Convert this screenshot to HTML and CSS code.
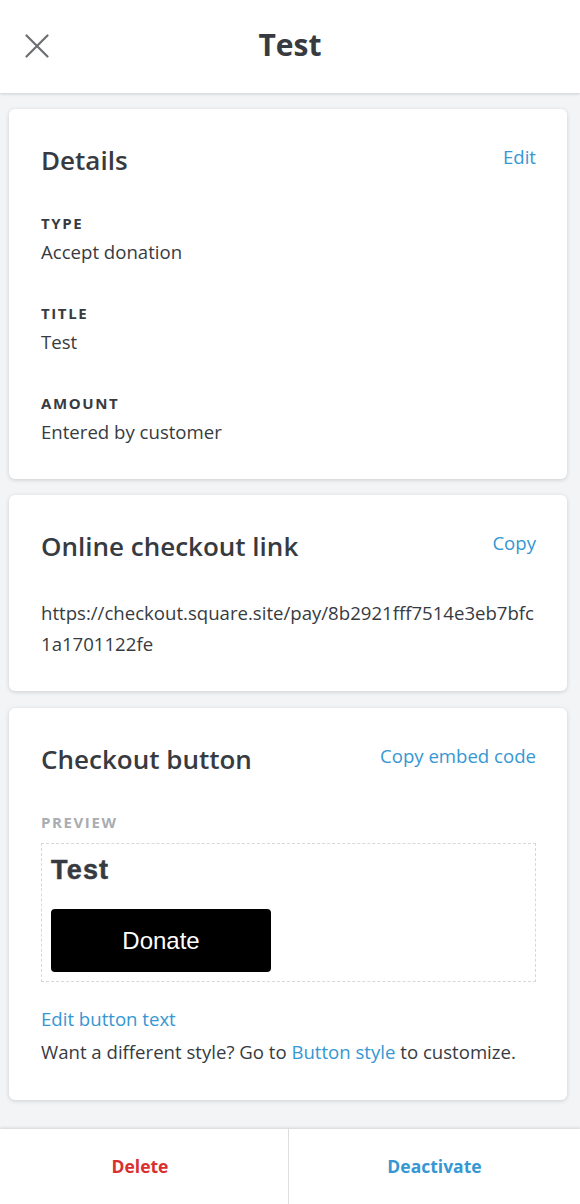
FILE: index.html
```html
<!DOCTYPE html>
<html>
<head>
<meta charset="utf-8">
<link rel="stylesheet" href="styles.css">
</head>
<body>
<header class="topbar">
  <button class="close" aria-label="Close">
    <svg width="24" height="24" viewBox="0 0 24 24"><path d="M1.5 1.5 L22.5 22.5 M22.5 1.5 L1.5 22.5" stroke="#6b6e72" stroke-width="2.2" stroke-linecap="round" fill="none"/></svg>
  </button>
  <h1 class="title">Test</h1>
</header>
<main class="content">
  <section class="card card-details">
    <div class="card-head">
      <h2>Details</h2>
      <a class="link">Edit</a>
    </div>
    <div class="field">
      <div class="label">TYPE</div>
      <div class="value">Accept donation</div>
    </div>
    <div class="field">
      <div class="label">TITLE</div>
      <div class="value">Test</div>
    </div>
    <div class="field">
      <div class="label">AMOUNT</div>
      <div class="value">Entered by customer</div>
    </div>
  </section>
  <section class="card card-link">
    <div class="card-head">
      <h2>Online checkout link</h2>
      <a class="link">Copy</a>
    </div>
    <p class="url">https://checkout.square.site/pay/8b2921fff7514e3eb7bfc<br>1a1701122fe</p>
  </section>
  <section class="card card-button">
    <div class="card-head">
      <h2>Checkout button</h2>
      <a class="link">Copy embed code</a>
    </div>
    <div class="preview-label">PREVIEW</div>
    <div class="preview">
      <div class="preview-title">Test</div>
      <div class="donate">Donate</div>
    </div>
    <a class="link edit-text">Edit button text</a>
    <p class="hint">Want a different style? Go to <a class="link">Button style</a> to customize.</p>
  </section>
</main>
<footer class="actions">
  <button class="action delete">Delete</button>
  <button class="action deactivate">Deactivate</button>
</footer>
</body>
</html>
```
FILE: styles.css
```css
* { box-sizing: border-box; }
html, body { margin: 0; padding: 0; }
body {
  width: 580px;
  height: 1204px;
  background: #f3f4f6;
  font-family: "Open Sans", "Liberation Sans", sans-serif;
  color: #373b41;
  display: flex;
  flex-direction: column;
  overflow: hidden;
}
.topbar {
  height: 93px;
  background: #fff;
  display: flex;
  align-items: center;
  justify-content: center;
  position: relative;
  box-shadow: 0 1px 3px rgba(0,0,0,0.16);
  z-index: 2;
}
.close {
  position: absolute;
  left: 25px;
  top: 34px;
  padding: 0;
  border: 0;
  background: none;
  width: 24px;
  height: 24px;
}
.close svg { display: block; }
.title {
  margin: 0;
  font-size: 30px;
  font-weight: 700;
  line-height: 40px;
  color: #373b41;
  padding-bottom: 4px;
}
.content {
  flex: 1;
  padding: 16px 13px 0 9px;
  display: flex;
  flex-direction: column;
  gap: 16px;
}
.card {
  background: #fff;
  border-radius: 6px;
  box-shadow: 0 1px 4px rgba(0,0,0,0.16);
  padding: 32px 31px 35px 32px;
}
.card-link { padding-top: 32px; padding-bottom: 32px; }
.card-button { padding-top: 32px; padding-bottom: 36px; margin-top: 1px; }
.card-head {
  display: flex;
  justify-content: space-between;
  align-items: flex-start;
}
.card-head h2 {
  margin: 0;
  font-size: 26px;
  line-height: 38px;
  font-weight: 600;
  color: #373b41;
}
.link {
  color: #3597d3;
  font-size: 18.6px;
  line-height: 24px;
  text-decoration: none;
}
.card-head .link { margin-top: 4px; }
.field { margin-top: 34px; }
.field + .field { margin-top: 39px; }
.label {
  font-size: 15px;
  font-weight: 700;
  letter-spacing: 1.6px;
  line-height: 20px;
}
.value {
  margin-top: 7px;
  font-size: 18.6px;
  line-height: 24px;
}
.url {
  margin: 32px 0 0;
  font-size: 18.6px;
  line-height: 31px;
}
.preview-label {
  margin-top: 34px;
  font-size: 15px;
  font-weight: 700;
  letter-spacing: 1.6px;
  line-height: 20px;
  color: #a9acb1;
}
.preview {
  margin-top: 11px;
  border: 1px dashed #d6d8db;
  padding: 11px 9px 9px;
  display: flex;
  flex-direction: column;
  align-items: flex-start;
}
.preview-title {
  font-family: "Liberation Sans", Arial, sans-serif;
  font-weight: 700;
  font-size: 27px;
  letter-spacing: 1.2px;
  line-height: 30px;
  color: #373b41;
  -webkit-text-stroke: 0.5px #373b41;
}
.donate {
  margin-top: 24px;
  width: 220px;
  height: 63px;
  background: #000;
  color: #fff;
  border-radius: 4px;
  display: flex;
  align-items: center;
  justify-content: center;
  font-family: "Liberation Sans", Arial, sans-serif;
  font-size: 24px;
}
.edit-text {
  display: block;
  margin-top: 25px;
}
.hint {
  margin: 9px 0 0;
  font-size: 18.6px;
  line-height: 24px;
}
.actions {
  height: 75px;
  background: #fff;
  display: flex;
  box-shadow: 0 -1px 3px rgba(0,0,0,0.14);
}
.action {
  border: 0;
  background: #fff;
  font-family: "Open Sans", "Liberation Sans", sans-serif;
  font-size: 17.5px;
  font-weight: 700;
  padding: 0 0 2px;
}
.delete { width: 289px; padding-right: 8px; color: #d9302f; border-right: 1px solid #dcdee1; }
.deactivate { flex: 1; color: #3597d3; }
```
